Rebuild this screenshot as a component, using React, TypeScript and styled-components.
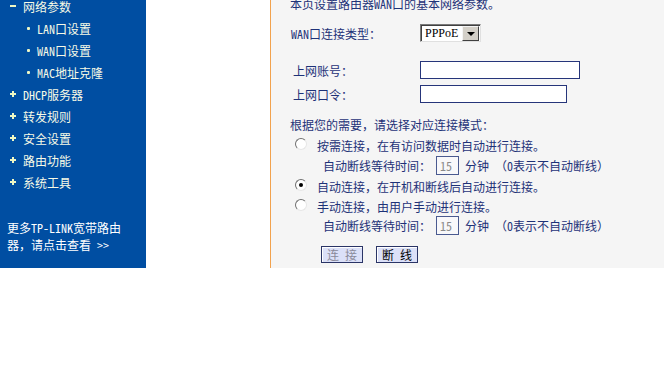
import React from "react";
import styled, { createGlobalStyle } from "styled-components";

const Global = createGlobalStyle`
  html, body { margin: 0; padding: 0; background: #ffffff; }
  body {
    font-family: "Noto Sans Mono CJK SC", "Noto Sans CJK SC", sans-serif;
    font-size: 12px;
    overflow: hidden;
  }
  * { box-sizing: border-box; }
`;

const Frame = styled.div`
  display: flex;
  height: 278px;
  margin-top: -10px;
`;

const Sidebar = styled.nav`
  width: 146px;
  flex: none;
  background: #004ea2;
  padding-top: 5px;
`;

const MenuItem = styled.div<{ $sub?: boolean }>`
  display: flex;
  align-items: center;
  height: 22px;
  padding-left: ${(p) => (p.$sub ? "27px" : "10px")};
  color: #f7fae6;
  white-space: nowrap;
`;

const Marker = styled.span<{ $kind: "plus" | "minus" | "dot" }>`
  position: relative;
  flex: none;
  width: ${(p) => (p.$kind === "dot" ? "10px" : "13px")};
  height: 12px;
  &::before,
  &::after {
    content: "";
    position: absolute;
    background: #eef7c4;
  }
  &::before {
    left: 0;
    top: 5px;
    width: ${(p) => (p.$kind === "dot" ? "3px" : "6px")};
    height: ${(p) => (p.$kind === "dot" ? "3px" : "2px")};
    border-radius: ${(p) => (p.$kind === "dot" ? "1px" : "0")};
  }
  &::after {
    display: ${(p) => (p.$kind === "plus" ? "block" : "none")};
    left: 2px;
    top: 3px;
    width: 2px;
    height: 6px;
  }
`;

const MoreText = styled.div`
  margin-top: 26px;
  padding-left: 7px;
  line-height: 17px;
  color: #ffffff;
`;

const Spacer = styled.div`
  width: 124px;
  flex: none;
  background: #ffffff;
`;

const Main = styled.main`
  flex: 1;
  background: #f5f5f5;
  border-left: 1px solid #f2a24e;
  padding: 3px 0 0 19px;
  color: #1e3278;
`;

const Row = styled.div<{ $h?: number; $mt?: number; $pl?: number }>`
  display: flex;
  align-items: center;
  height: ${(p) => p.$h ?? 20}px;
  margin-top: ${(p) => p.$mt ?? 0}px;
  padding-left: ${(p) => p.$pl ?? 0}px;
  white-space: nowrap;
`;

const Label = styled.span<{ $indent?: number }>`
  width: 130px;
  flex: none;
  padding-left: ${(p) => p.$indent ?? 0}px;
`;

const SelectBox = styled.div`
  display: flex;
  align-items: center;
  width: 61px;
  height: 18px;
  background: #ffffff;
  border-top: 1px solid #7a7a7a;
  border-left: 1px solid #7a7a7a;
  border-right: 1px solid #e0e0e0;
  border-bottom: 1px solid #e0e0e0;
  box-shadow: inset 1px 1px 0 #404040;
  padding: 1px 1px 1px 4px;
  color: #000000;
`;

const SelectValue = styled.span`
  flex: 1;
  font-family: "Liberation Serif", "Noto Sans CJK SC", serif;
  font-size: 12px;
`;

const SelectArrow = styled.span`
  position: relative;
  width: 17px;
  height: 15px;
  background: #d4d0c8;
  border-top: 1px solid #f4f4f4;
  border-left: 1px solid #f4f4f4;
  border-right: 1px solid #404040;
  border-bottom: 1px solid #404040;
  &::after {
    content: "";
    position: absolute;
    left: 4px;
    top: 5px;
    border-left: 4px solid transparent;
    border-right: 4px solid transparent;
    border-top: 4px solid #000000;
  }
`;

const TextInput = styled.div<{ $w: number }>`
  width: ${(p) => p.$w}px;
  height: 18px;
  background: #ffffff;
  border: 1px solid #26357a;
`;

const SmallInput = styled.span`
  display: inline-flex;
  align-items: center;
  width: 23px;
  height: 19px;
  padding-left: 3px;
  margin: 0 6px 0 5px;
  background: #f8f8fa;
  border: 1px solid #4a5a90;
  color: #8a8a8a;
`;

const Radio = styled.span<{ $checked?: boolean }>`
  position: relative;
  flex: none;
  width: 12px;
  height: 12px;
  margin: -2px 10px 0 5px;
  border-radius: 50%;
  background: #ffffff;
  border-top: 1px solid #707070;
  border-left: 1px solid #707070;
  border-right: 1px solid #e6e6e6;
  border-bottom: 1px solid #e6e6e6;
  &::after {
    content: "";
    display: ${(p) => (p.$checked ? "block" : "none")};
    position: absolute;
    left: 3px;
    top: 3px;
    width: 4px;
    height: 4px;
    border-radius: 50%;
    background: #000000;
  }
`;

const Button = styled.span<{ $disabled?: boolean }>`
  display: inline-flex;
  align-items: center;
  justify-content: center;
  width: 42px;
  height: 17px;
  margin-right: 13px;
  background: #dbe0f8;
  border: 1px solid #2a3466;
  box-shadow: inset 1px 1px 0 #ffffff;
  color: ${(p) => (p.$disabled ? "#8a8a9a" : "#000000")};
`;

const menu: { text: string; kind: "plus" | "minus" | "dot"; sub?: boolean }[] = [
  { text: "网络参数", kind: "minus" },
  { text: "LAN口设置", kind: "dot", sub: true },
  { text: "WAN口设置", kind: "dot", sub: true },
  { text: "MAC地址克隆", kind: "dot", sub: true },
  { text: "DHCP服务器", kind: "plus" },
  { text: "转发规则", kind: "plus" },
  { text: "安全设置", kind: "plus" },
  { text: "路由功能", kind: "plus" },
  { text: "系统工具", kind: "plus" },
];

export default function App() {
  return (
    <>
      <Global />
      <Frame>
        <Sidebar>
          {menu.map((m) => (
            <MenuItem key={m.text} $sub={m.sub}>
              <Marker $kind={m.kind} />
              {m.text}
            </MenuItem>
          ))}
          <MoreText>
            更多TP-LINK宽带路由
            <br />
            器，请点击查看 &gt;&gt;
          </MoreText>
        </Sidebar>
        <Spacer />
        <Main>
          <Row>本页设置路由器WAN口的基本网络参数。</Row>
          <Row $mt={10}>
            <Label $indent={1}>WAN口连接类型：</Label>
            <SelectBox>
              <SelectValue>PPPoE</SelectValue>
              <SelectArrow />
            </SelectBox>
          </Row>
          <Row $mt={17}>
            <Label $indent={3}>上网账号：</Label>
            <TextInput $w={160} />
          </Row>
          <Row $mt={4}>
            <Label $indent={3}>上网口令：</Label>
            <TextInput $w={147} />
          </Row>
          <Row $mt={10}>根据您的需要，请选择对应连接模式：</Row>
          <Row $mt={1}>
            <Radio />
            按需连接，在有访问数据时自动进行连接。
          </Row>
          <Row $pl={33}>
            自动断线等待时间：
            <SmallInput>15</SmallInput>
            分钟 （0表示不自动断线）
          </Row>
          <Row $mt={1}>
            <Radio $checked />
            自动连接，在开机和断线后自动进行连接。
          </Row>
          <Row>
            <Radio />
            手动连接，由用户手动进行连接。
          </Row>
          <Row $h={18} $pl={33}>
            自动断线等待时间：
            <SmallInput>15</SmallInput>
            分钟 （0表示不自动断线）
          </Row>
          <Row $mt={10} $pl={31}>
            <Button $disabled>连 接</Button>
            <Button>断 线</Button>
          </Row>
        </Main>
      </Frame>
    </>
  );
}
